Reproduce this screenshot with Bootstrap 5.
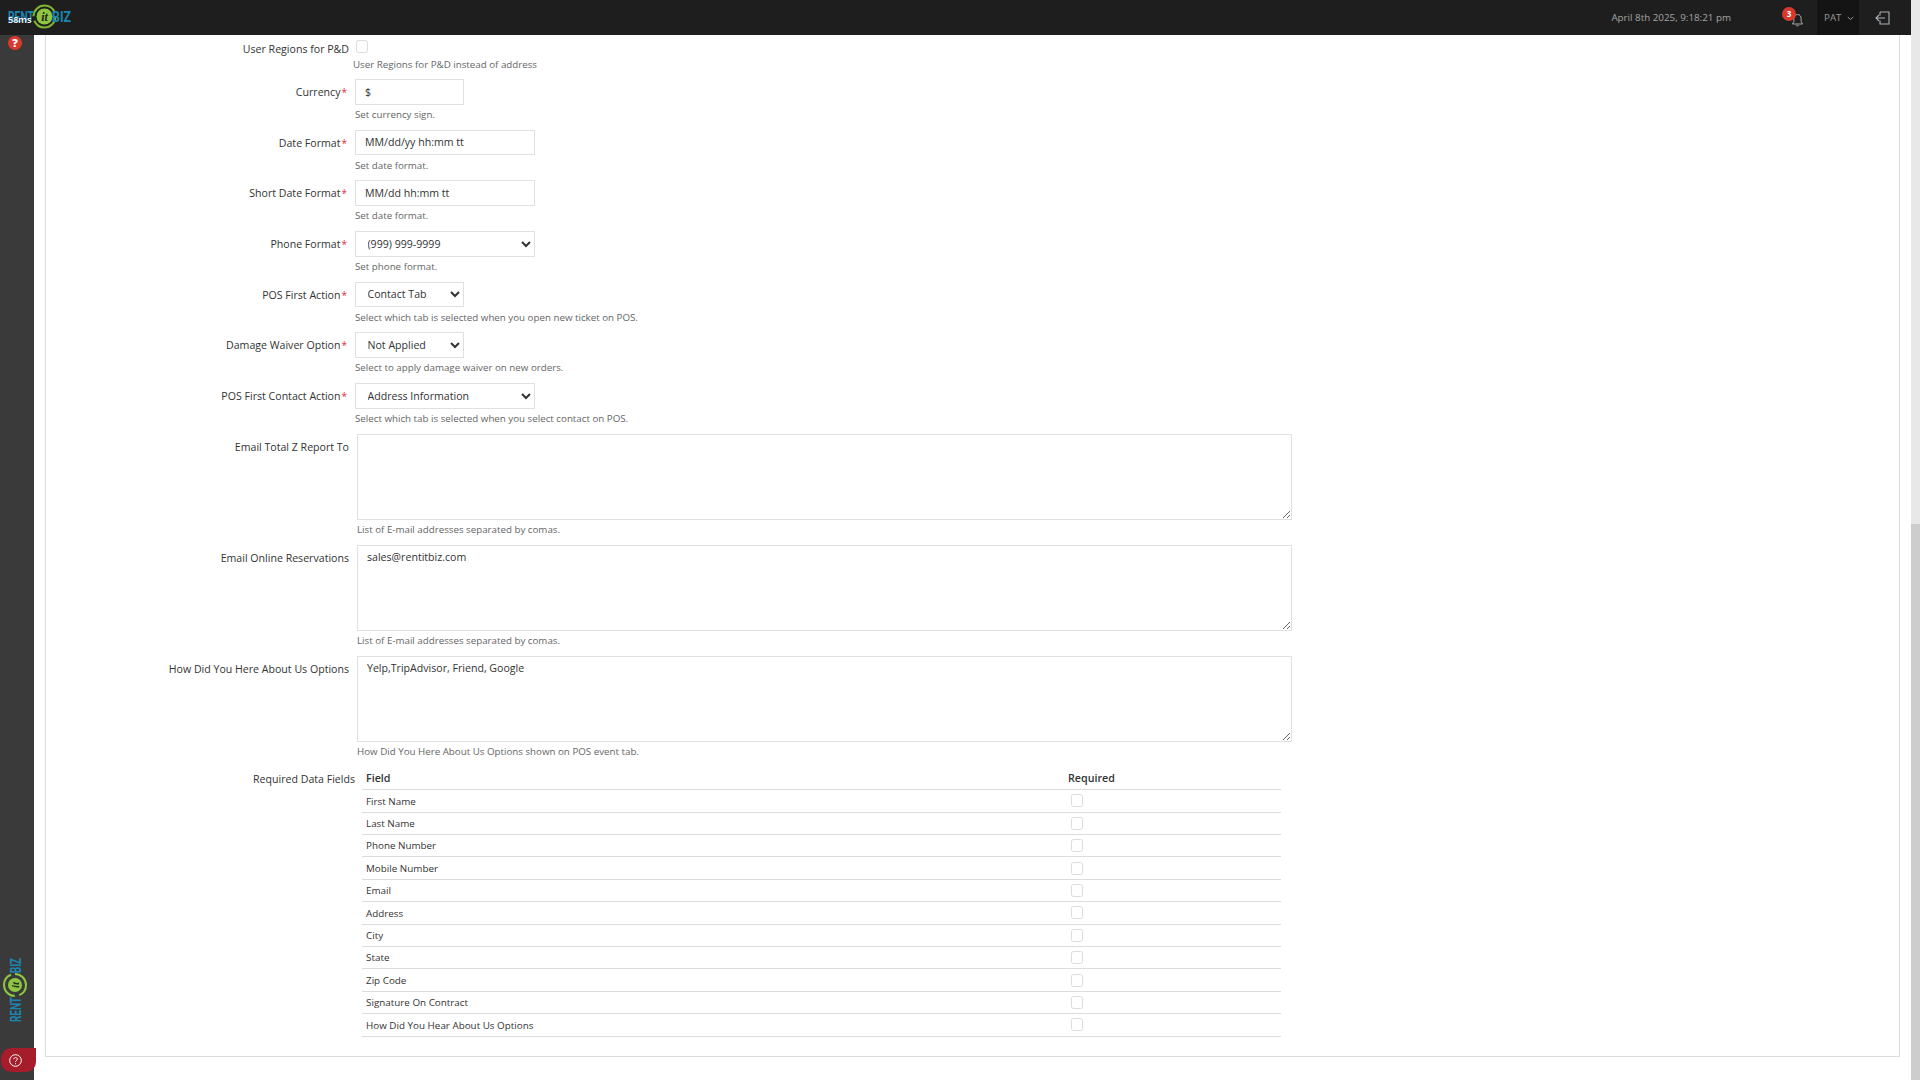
<!DOCTYPE html>
<html lang="en">
<head>
<meta charset="utf-8">
<title>Settings</title>
<link href="https://cdn.jsdelivr.net/npm/bootstrap@5.3.0/dist/css/bootstrap.min.css" rel="stylesheet">
<style>
html,body{height:100%;overflow:hidden}
body{font-family:"Open Sans","Noto Sans",sans-serif;font-size:11px;color:#333;background:#fff}
.app-shell{height:1080px}
.app-main{min-width:0}
.top-strip{height:35px;background:#1e1e1e;color:#aaa;font-size:9.8px}
.brand-wrap{width:90px;height:35px}
.brand-svg{display:block}
.ms-tag{top:14px;left:8px;color:#fff;font-size:9px;line-height:12px;font-weight:600}
.clock-text{margin-right:60px;color:#a5a5a5;padding-top:1px}
.bell-wrap{width:20px;height:35px;margin-right:6px;padding-top:4px}
.alert-dot{top:7px;left:-9px;width:14px;height:14px;border-radius:50%;background:#d9382c;color:#fff;font-size:8px;font-weight:700;line-height:14px;text-align:center}
.user-box{width:42px;height:35px;background:#141414;padding:1px 0 0 7px;color:#999;gap:6px;font-size:9.8px}
.exit-box{width:52px;height:35px;padding-right:6px}
.side-rail{width:34px;background:#3a3a3a}
.help-dot{width:14px;height:14px;margin:1px 0 0 8px;border-radius:50%;background:#d9382c;color:#fff;font-size:11px;font-weight:800;line-height:14px;text-align:center}
.help-slot{top:35px;left:0}
.rail-logo{bottom:55px;left:3px}
.help-pill{left:1px;bottom:8px;width:35px;height:24px;background:#a61c2a;border-radius:10px 0 10px 10px;z-index:2}
.scroll-track{width:9px;background:#e8e8e8}
.scroll-thumb{height:556px;background:#cdcdcd}
.page-body{padding:0 11px;background:#fff}
.form-panel{height:1022px;border:solid #dcdcdc;border-width:0 1px 1px 1px;overflow:hidden}
.set-row{height:50.67px}
.set-row-first{height:44px;padding-top:5px}
.set-row-area{height:111px}
.lbl-col{width:303px;color:#333;flex:none;text-align:right;line-height:26px;font-size:10.6px;padding:0;margin:0}
.lbl-first{line-height:18px}
.lbl-req{padding-right:2px}
.star{color:#e0323c;margin-left:1px;font-size:10px}
.ctrl-col-tight{margin-left:6px}
.ctrl-col-first{margin-left:6px}
.ctrl-col-area{margin-left:8px}
.fld{height:25.6px;border:1px solid #e0e0e0;border-radius:0;font-size:10.6px;line-height:1.2;color:#333;padding:0 0 0 9px;box-shadow:none;background-color:#fff}
.fld-sm{width:109px}
.fld-md{width:180px}
select.fld{appearance:auto;-webkit-appearance:menulist;background-image:none;padding:0 0 0 7.500px;font-weight:400}
.txt-area{width:935px;height:86px;border:1px solid #e0e0e0;border-radius:0;font-size:10.6px;line-height:17px;color:#333;padding:3px 9px;box-shadow:none}
.hint{font-size:9.75px;line-height:12px;color:#666;margin-top:4.500px}
.hint-first{margin-top:5.500px;margin-left:-2px}
.chk{width:12px;height:13px;border:1px solid #dcdcdc;border-radius:2px;background:#fff;margin:0;display:block}
.chk-top{margin-left:1px}
.req-lbl{width:309px;line-height:16px;padding-top:4px}
.req-tbl-wrap{width:919px;margin-left:7px}
.req-tbl{--bs-table-border-color:#dcdcdc;margin:0;table-layout:fixed;width:100%;font-size:9.85px;color:#333}
.req-tbl th{font-size:10.7px;font-weight:600;height:23.200px;padding:0 0 0 4px;vertical-align:middle;border-bottom:1px solid #dcdcdc}
.req-tbl td{height:22.4px;padding:0 0 0 4px;vertical-align:middle;border-bottom:1px solid #dcdcdc}
.col-need{width:217px}
.chk-cell{margin-left:3px}
</style>
</head>
<body>
<div class="app-shell d-flex">
  <div class="flex-grow-1 d-flex flex-column app-main position-relative">
    <header class="top-strip d-flex align-items-center flex-shrink-0">
      <div class="brand-wrap position-relative flex-shrink-0">
        <svg class="brand-svg" width="90" height="35" viewBox="0 0 90 35" aria-hidden="true">
          <circle cx="44.500" cy="16.500" r="11" fill="none" stroke="#7fb52f" stroke-width="2" stroke-dasharray="30 4.500"/>
          <circle cx="44.500" cy="16.500" r="8" fill="#8dc63f"/>
          <text x="44.500" y="20.500" text-anchor="middle" font-family="'Liberation Serif',serif" font-style="italic" font-weight="700" font-size="12" fill="#1e1e1e">it</text>
          <text x="8" y="22" font-family="Roboto,'Liberation Sans',sans-serif" font-weight="700" font-size="14" fill="#1a86b4" textLength="26" lengthAdjust="spacingAndGlyphs">RENT</text>
          <text x="52" y="22" font-family="Roboto,'Liberation Sans',sans-serif" font-weight="700" font-size="14" fill="#1a86b4" textLength="19" lengthAdjust="spacingAndGlyphs">BIZ</text>
        </svg>
        <span class="ms-tag position-absolute">58ms</span>
      </div>
      <div class="ms-auto d-flex align-items-center">
        <span class="clock-text">April 8th 2025, 9:18:21 pm</span>
        <span class="bell-wrap position-relative d-flex align-items-center">
          <svg width="13" height="14" viewBox="0 0 13 14" aria-hidden="true"><path d="M6.500 1.500c-2.300 0-3.600 1.800-3.600 4v3L1.500 11h10l-1.400-2.500v-3c0-2.200-1.300-4-3.600-4zM5 12.200c.3 1 2.700 1 3 0" fill="none" stroke="#aaa" stroke-width="1"/></svg>
          <span class="alert-dot position-absolute">3</span>
        </span>
        <span class="user-box d-flex align-items-center">PAT
          <svg width="7" height="5" viewBox="0 0 7 5" aria-hidden="true"><path d="M.8 1l2.700 2.500L6.200 1" fill="none" stroke="#999" stroke-width="1"/></svg>
        </span>
        <span class="exit-box d-flex align-items-center justify-content-center">
          <svg width="15" height="14" viewBox="0 0 15 14" aria-hidden="true"><path d="M5 1h9v12H5V9.500M5 4.500V1M10 7H1M4 4L1 7l3 3" fill="none" stroke="#aab2b8" stroke-width="1.100"/></svg>
        </span>
      </div>
    </header>
    <div class="d-flex flex-grow-1">
      <aside class="side-rail flex-shrink-0"></aside>
      <main class="page-body flex-grow-1">
        <form class="form-panel">
          <div class="set-row-first d-flex">
            <label class="lbl-col lbl-first" for="regions">User Regions for P&amp;D</label>
            <div class="ctrl-col-first">
              <input id="regions" class="chk chk-top form-check-input" type="checkbox">
              <div class="hint hint-first">User Regions for P&amp;D instead of address</div>
            </div>
          </div>
          <div class="set-row d-flex">
            <label class="lbl-col lbl-req">Currency<span class="star">*</span></label>
            <div class="ctrl-col-tight">
              <input class="form-control fld fld-sm" value="$">
              <div class="hint">Set currency sign.</div>
            </div>
          </div>
          <div class="set-row d-flex">
            <label class="lbl-col lbl-req">Date Format<span class="star">*</span></label>
            <div class="ctrl-col-tight">
              <input class="form-control fld fld-md" value="MM/dd/yy hh:mm tt">
              <div class="hint">Set date format.</div>
            </div>
          </div>
          <div class="set-row d-flex">
            <label class="lbl-col lbl-req">Short Date Format<span class="star">*</span></label>
            <div class="ctrl-col-tight">
              <input class="form-control fld fld-md" value="MM/dd hh:mm tt">
              <div class="hint">Set date format.</div>
            </div>
          </div>
          <div class="set-row d-flex">
            <label class="lbl-col lbl-req">Phone Format<span class="star">*</span></label>
            <div class="ctrl-col-tight">
              <select class="form-select fld fld-md"><option>(999) 999-9999</option></select>
              <div class="hint">Set phone format.</div>
            </div>
          </div>
          <div class="set-row d-flex">
            <label class="lbl-col lbl-req">POS First Action<span class="star">*</span></label>
            <div class="ctrl-col-tight">
              <select class="form-select fld fld-sm"><option>Contact Tab</option></select>
              <div class="hint">Select which tab is selected when you open new ticket on POS.</div>
            </div>
          </div>
          <div class="set-row d-flex">
            <label class="lbl-col lbl-req">Damage Waiver Option<span class="star">*</span></label>
            <div class="ctrl-col-tight">
              <select class="form-select fld fld-sm"><option>Not Applied</option></select>
              <div class="hint">Select to apply damage waiver on new orders.</div>
            </div>
          </div>
          <div class="set-row d-flex">
            <label class="lbl-col lbl-req">POS First Contact Action<span class="star">*</span></label>
            <div class="ctrl-col-tight">
              <select class="form-select fld fld-md"><option>Address Information</option></select>
              <div class="hint">Select which tab is selected when you select contact on POS.</div>
            </div>
          </div>
          <div class="set-row-area d-flex">
            <label class="lbl-col">Email Total Z Report To</label>
            <div class="ctrl-col-area">
              <textarea class="form-control txt-area"></textarea>
              <div class="hint">List of E-mail addresses separated by comas.</div>
            </div>
          </div>
          <div class="set-row-area d-flex">
            <label class="lbl-col">Email Online Reservations</label>
            <div class="ctrl-col-area">
              <textarea class="form-control txt-area">sales@rentitbiz.com</textarea>
              <div class="hint">List of E-mail addresses separated by comas.</div>
            </div>
          </div>
          <div class="set-row-area d-flex">
            <label class="lbl-col">How Did You Here About Us Options</label>
            <div class="ctrl-col-area">
              <textarea class="form-control txt-area">Yelp,TripAdvisor, Friend, Google</textarea>
              <div class="hint">How Did You Here About Us Options shown on POS event tab.</div>
            </div>
          </div>
          <div class="d-flex">
            <label class="lbl-col req-lbl">Required Data Fields</label>
            <div class="req-tbl-wrap">
              <table class="table req-tbl">
                <thead><tr><th>Field</th><th class="col-need">Required</th></tr></thead>
                <tbody>
                  <tr><td>First Name</td><td><input type="checkbox" class="form-check-input chk chk-cell"></td></tr>
                  <tr><td>Last Name</td><td><input type="checkbox" class="form-check-input chk chk-cell"></td></tr>
                  <tr><td>Phone Number</td><td><input type="checkbox" class="form-check-input chk chk-cell"></td></tr>
                  <tr><td>Mobile Number</td><td><input type="checkbox" class="form-check-input chk chk-cell"></td></tr>
                  <tr><td>Email</td><td><input type="checkbox" class="form-check-input chk chk-cell"></td></tr>
                  <tr><td>Address</td><td><input type="checkbox" class="form-check-input chk chk-cell"></td></tr>
                  <tr><td>City</td><td><input type="checkbox" class="form-check-input chk chk-cell"></td></tr>
                  <tr><td>State</td><td><input type="checkbox" class="form-check-input chk chk-cell"></td></tr>
                  <tr><td>Zip Code</td><td><input type="checkbox" class="form-check-input chk chk-cell"></td></tr>
                  <tr><td>Signature On Contract</td><td><input type="checkbox" class="form-check-input chk chk-cell"></td></tr>
                  <tr><td>How Did You Hear About Us Options</td><td><input type="checkbox" class="form-check-input chk chk-cell"></td></tr>
                </tbody>
              </table>
            </div>
          </div>
        </form>
      </main>
    </div>
    <div class="help-slot position-absolute"><div class="help-dot">?</div></div>
    <svg class="rail-logo position-absolute" width="24" height="70" viewBox="0 0 24 70" aria-hidden="true">
      <g transform="translate(0 70) rotate(-90)">
        <circle cx="40" cy="12" r="11" fill="none" stroke="#8dc63f" stroke-width="2" stroke-dasharray="30 4.500"/>
        <circle cx="40" cy="12" r="7" fill="#8dc63f"/>
        <text x="40" y="15.500" text-anchor="middle" font-family="'Liberation Serif',serif" font-style="italic" font-weight="700" font-size="11" fill="#2a2a2a">it</text>
        <text x="3" y="17.700" font-family="Roboto,'Liberation Sans',sans-serif" font-weight="700" font-size="15" fill="#1a86b4" textLength="25" lengthAdjust="spacingAndGlyphs">RENT</text>
        <text x="52" y="17.700" font-family="Roboto,'Liberation Sans',sans-serif" font-weight="700" font-size="15" fill="#1a86b4" textLength="15" lengthAdjust="spacingAndGlyphs">BIZ</text>
      </g>
    </svg>
    <div class="help-pill position-absolute d-flex align-items-center">
      <svg class="ms-2" width="13" height="13" viewBox="0 0 13 13" aria-hidden="true"><circle cx="6.500" cy="6.500" r="5.800" fill="none" stroke="#fff"/><path d="M4.800 5.200c0-2.200 3.600-2.200 3.500 0 0 1.300-1.800 1.300-1.800 2.600M6.500 9.200v1" fill="none" stroke="#fff"/></svg>
    </div>
  </div>
  <div class="scroll-track flex-shrink-0 d-flex flex-column justify-content-end"><div class="scroll-thumb"></div></div>
</div>
<script src="https://cdn.jsdelivr.net/npm/bootstrap@5.3.0/dist/js/bootstrap.bundle.min.js"></script>
</body>
</html>
